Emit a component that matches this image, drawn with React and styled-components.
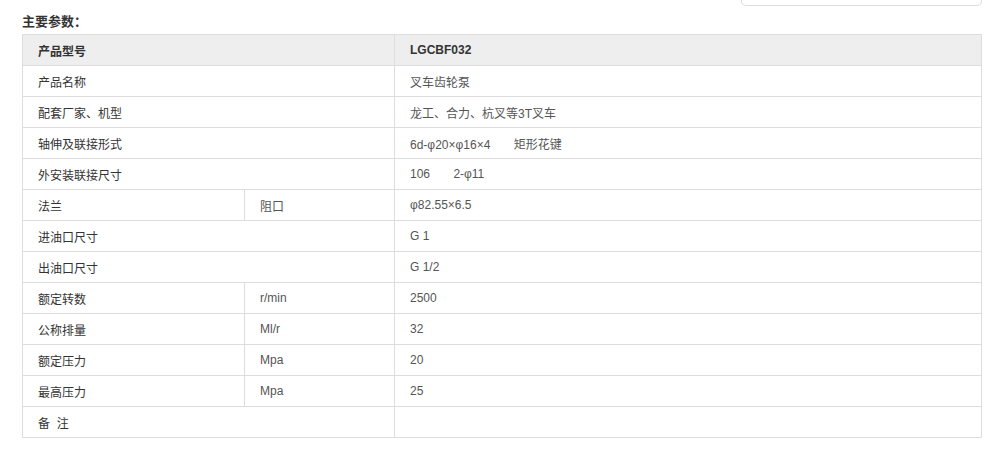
import React from "react";
import styled, { createGlobalStyle } from "styled-components";

const Global = createGlobalStyle`
  html, body { margin: 0; padding: 0; background: #fff; }
  body { font-family: Arial, "Liberation Sans", "Noto Sans CJK SC", sans-serif; color: #333; }
`;

const Page = styled.div`
  width: 996px;
  padding: 0 15px 0 22px;
  box-sizing: border-box;
`;

const TopBar = styled.div`
  display: flex;
  justify-content: flex-end;
  height: 6px;
  margin-right: -1px;
`;

const SearchBox = styled.div`
  width: 239px;
  height: 5px;
  border: 1px solid #ddd;
  border-top: none;
  border-radius: 0 0 5px 5px;
`;

const Title = styled.h3`
  margin: 0;
  padding-top: 4px;
  height: 24px;
  line-height: 24px;
  font-size: 13px;
  font-weight: bold;
  color: #333;
`;

const Table = styled.table`
  width: 959px;
  border-collapse: collapse;
  table-layout: fixed;
  font-size: 12px;
`;

const Cell = styled.td`
  height: 30px;
  padding: 0 0 0 15px;
  border: 1px solid #ddd;
  color: ${(p) => (p.$muted ? "#555" : "#333")};
  font-weight: ${(p) => (p.$head ? "bold" : "normal")};
  background: ${(p) => (p.$head ? "#eee" : "#fff")};
  white-space: pre;
  vertical-align: middle;
`;

const rows = [
  { a: "产品名称", v: "叉车齿轮泵" },
  { a: "配套厂家、机型", v: "龙工、合力、杭叉等3T叉车" },
  { a: "轴伸及联接形式", v: "6d-φ20×φ16×4\u00a0\u00a0\u00a0\u00a0\u00a0\u00a0\u00a0矩形花键" },
  { a: "外安装联接尺寸", v: "106\u00a0\u00a0\u00a0\u00a0\u00a0\u00a0\u00a02-φ11" },
  { a: "法兰", b: "阻口", v: "φ82.55×6.5" },
  { a: "进油口尺寸", v: "G 1" },
  { a: "出油口尺寸", v: "G 1/2" },
  { a: "额定转数", b: "r/min", v: "2500" },
  { a: "公称排量", b: "Ml/r", v: "32" },
  { a: "额定压力", b: "Mpa", v: "20" },
  { a: "最高压力", b: "Mpa", v: "25" },
  { a: "备\u00a0\u00a0注", v: "" },
];

export default function App() {
  return (
    <Page>
      <Global />
      <TopBar>
        <SearchBox />
      </TopBar>
      <Title>主要参数：</Title>
      <Table>
        <colgroup>
          <col style={{ width: 222 }} />
          <col style={{ width: 150 }} />
          <col style={{ width: 587 }} />
        </colgroup>
        <tbody>
          <tr>
            <Cell $head colSpan={2}>产品型号</Cell>
            <Cell $head>LGCBF032</Cell>
          </tr>
          {rows.map((r, i) => (
            <tr key={i}>
              {r.b !== undefined ? (
                <>
                  <Cell>{r.a}</Cell>
                  <Cell $muted>{r.b}</Cell>
                </>
              ) : (
                <Cell colSpan={2}>{r.a}</Cell>
              )}
              <Cell $muted>{r.v}</Cell>
            </tr>
          ))}
        </tbody>
      </Table>
    </Page>
  );
}
